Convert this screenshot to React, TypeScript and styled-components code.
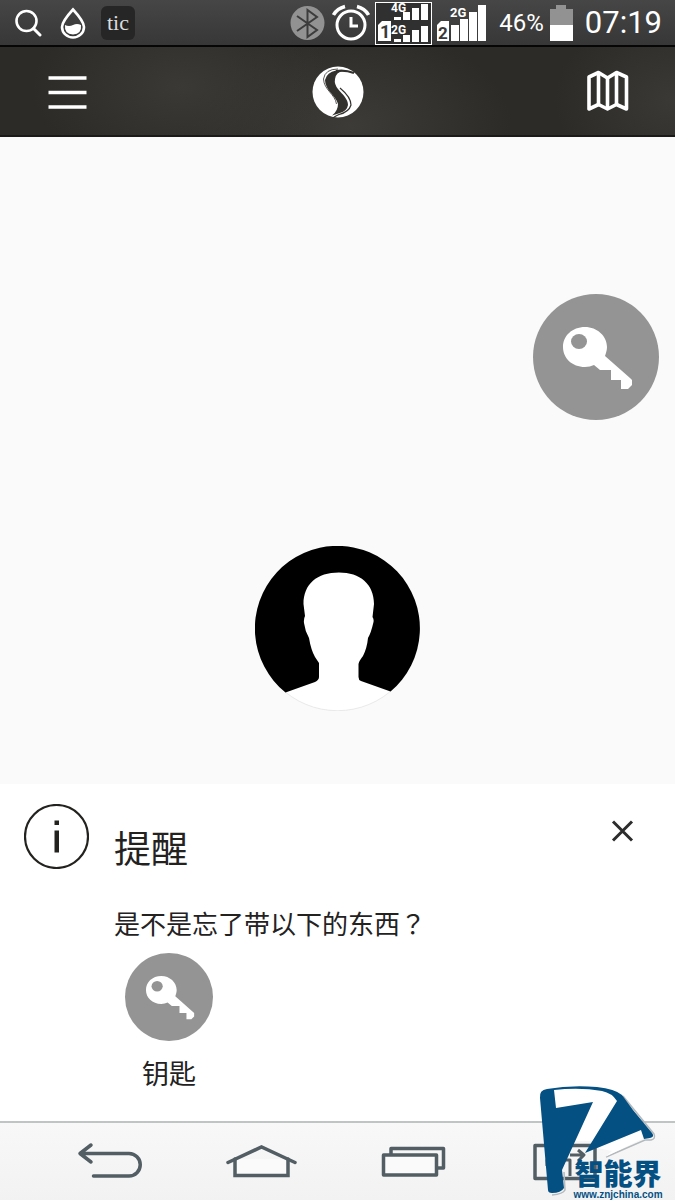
import React from 'react';
import styled, { createGlobalStyle } from 'styled-components';

const GlobalStyle = createGlobalStyle`
  *, *::before, *::after { box-sizing: border-box; }
  body {
    margin: 0;
    background: #fafafa;
    color: #23221f;
    font-family: Roboto, "Noto Sans CJK SC", sans-serif;
  }
  h1, p, ul { margin: 0; padding: 0; }
  svg { display: block; flex: none; }
`;

const Screen = styled.div`
  position: relative;
  display: flex;
  flex-direction: column;
  min-height: 100vh;
`;

const StatusBar = styled.div`
  display: flex;
  align-items: center;
  justify-content: space-between;
  height: 47px;
  padding: 0 13px 0 14px;
  border-bottom: 2px solid #060606;
  background: linear-gradient(#464646, #373737);
  color: #fff;
`;

const StatusGroup = styled.div<{ $gap: number }>`
  display: flex;
  align-items: center;
  gap: ${(p) => p.$gap}px;
`;

const AppBadge = styled.span`
  display: flex;
  align-items: center;
  justify-content: center;
  width: 34px;
  height: 34px;
  border-radius: 6px;
  background: #262626;
  color: #dcdcdc;
  font: 22px/32px "Liberation Serif", serif;
`;

const StatusText = styled.span<{ $size: number }>`
  font-size: ${(p) => p.$size}px;
  line-height: 40px;
`;

const Header = styled.header`
  display: grid;
  grid-template-columns: 1fr auto 1fr;
  align-items: center;
  height: 90px;
  padding: 2px 46px 0;
  border-bottom: 2px solid #1b1a18;
  background:
    radial-gradient(ellipse 150px 90px at 27% 45%, #3a3935, transparent),
    radial-gradient(ellipse 160px 100px at 52% 90%, #3c3b37, transparent),
    radial-gradient(ellipse 120px 90px at 100% 60%, #3a3935, transparent),
    #2c2b28;
`;

const IconButton = styled.button<{ $end?: boolean }>`
  display: flex;
  justify-self: ${(p) => (p.$end ? 'end' : 'start')};
  padding: 0;
  border: 0;
  background: none;
  color: inherit;
  cursor: pointer;
`;

const Stage = styled.main`
  display: flex;
  flex: 1;
  flex-direction: column;
  align-items: center;
  gap: 126px;
  padding: 157px 16px 72px;
  background: #fafafa;
`;

const NearbyItem = styled.button`
  align-self: flex-end;
  padding: 0;
  border: 0;
  background: none;
  cursor: pointer;
`;

const Reminder = styled.section`
  display: grid;
  grid-template-columns: 65px 1fr auto;
  column-gap: 25px;
  align-items: start;
  padding: 20px 38px 26px 24px;
  background: #fff;
`;

const ReminderBody = styled.div`
  display: flex;
  flex-direction: column;
  align-items: flex-start;
  padding-top: 23px;
`;

const Title = styled.h1`
  font-size: 37px;
  font-weight: 400;
  line-height: 48px;
`;

const Message = styled.p`
  padding-top: 30px;
  font-size: 26px;
  line-height: 40px;
`;

/* The Traditional Chinese face centres full-width punctuation in its cell. */
const CentredMark = styled.span`
  font-family: "Noto Sans CJK TC", sans-serif;
  line-height: 20px;
`;

const ItemList = styled.ul`
  display: flex;
  gap: 24px;
  padding: 8px 0 0 11px;
  list-style: none;
`;

const Item = styled.li`
  display: flex;
  flex-direction: column;
  align-items: center;
  gap: 14px;
  font-size: 27px;
  line-height: 40px;
`;

const CloseButton = styled(IconButton)`
  padding: 14px 0;
`;

const NavBar = styled.nav`
  display: grid;
  grid-template-columns: repeat(4, 1fr);
  height: 79px;
  padding: 0 34px;
  border-top: 2px solid #bfc4c4;
  background: linear-gradient(#f8f8f8, #f2f2f2);
`;

const NavButton = styled.button`
  display: flex;
  align-items: center;
  justify-content: center;
  padding: 0;
  border: 0;
  background: none;
  color: #525e64;
  cursor: pointer;
`;

const Watermark = styled.div`
  position: absolute;
  right: 12px;
  bottom: 0;
  width: 124px;
  height: 118px;
  color: #045083;
  pointer-events: none;
`;

const WatermarkText = styled.div`
  position: absolute;
  right: 0;
  bottom: 0;
  display: flex;
  flex-direction: column;
  align-items: center;
  gap: 3px;
  width: 90px;
  white-space: nowrap;
`;

const BrandName = styled.span`
  font: 900 29px/30px "Noto Sans CJK SC", sans-serif;
`;

const BrandUrl = styled.span`
  font: 700 10px/10px "Liberation Sans", sans-serif;
`;

const KeyBadge = ({ size }: { size: number }) => (
  <svg width={size} height={size} viewBox="0 0 126 126" aria-hidden="true">
    <circle cx="63" cy="63" r="63" fill="#949494" />
    <path
      fill="#fff"
      d="M52 33C64 33 74 42 74 53C74 56 73 59 72 62L97 84L99 86V91L95 95H88V86H78V76H67L61 71Q57 73 52 73C39 73 30 64 30 53C30 42 39 33 52 33Z"
    />
    <ellipse cx="46" cy="47.500" rx="8" ry="7.500" fill="#949494" />
  </svg>
);

const bars = (x: number, base: number, w: number, step: number, heights: number[]) =>
  heights.map((h, i) => <rect key={i} x={x + i * step} y={base - h} width={w} height={h} />);

export default function App() {
  return (
    <>
      <GlobalStyle />
      <Screen>
        <StatusBar>
          <StatusGroup $gap={16}>
            <svg width="28" height="30" viewBox="0 0 28 30" fill="none" stroke="#fff" strokeLinecap="round">
              <circle cx="12.500" cy="13" r="10" strokeWidth="2.600" />
              <path d="M19.500 20.500L26 27" strokeWidth="3" />
            </svg>
            <StatusGroup $gap={15}>
              <svg width="28" height="32" viewBox="0 0 28 32">
                <path
                  d="M15 2.500Q26 14.500 26 20A11 10.500 0 0 1 4 20Q4 14.500 15 2.500Z"
                  fill="none"
                  stroke="#fff"
                  strokeWidth="2.600"
                />
                <path d="M7 18Q11 20 15 18T23 18Q24 27 15 27.500Q6 27 7 18Z" fill="#fff" />
              </svg>
              <AppBadge>tic</AppBadge>
            </StatusGroup>
          </StatusGroup>
          <StatusGroup $gap={12}>
            <StatusGroup $gap={5}>
              <svg width="37" height="45" viewBox="290 0 37 45">
                <circle cx="307.500" cy="23" r="17" fill="#929292" />
                <path d="M297 16L317 30L307.500 37V10L317 17L297 31" fill="none" stroke="#3c3c3c" strokeWidth="2" />
              </svg>
              <svg width="38" height="45" viewBox="333 0 38 45" fill="none" stroke="#fff" strokeWidth="3">
                <circle cx="352" cy="25" r="14" />
                <path d="M352 17V26H359" />
                <path d="M334.500 15Q338 8.500 346 6.500M369.500 15Q366 8.500 358 6.500" strokeWidth="3.500" />
              </svg>
              <svg width="57" height="45" viewBox="375 0 57 45" fill="#fff" fontFamily="Roboto" fontWeight="700">
                <rect x="375.500" y="2.500" width="56" height="42" fill="#303030" stroke="#fff" />
                {bars(394, 20, 7, 9, [3, 8, 12, 16])}
                {bars(394, 42, 7, 9, [3, 7, 12, 16])}
                <text x="391" y="12" fontSize="12">4G</text>
                <text x="391" y="34" fontSize="12">2G</text>
                <path d="M378 25L382 21H391V41H378Z" />
                <text x="380" y="38" fontSize="18" fill="#3a3a3a">1</text>
              </svg>
              <svg width="50" height="45" viewBox="437 0 50 45" fill="#fff" fontFamily="Roboto" fontWeight="700">
                <text x="450" y="17" fontSize="13">2G</text>
                {bars(451, 41, 8, 9, [16, 22, 29, 36])}
                <path d="M437 25L441 21H449V41H437Z" />
                <text x="438" y="39" fontSize="17" fill="#3a3a3a">2</text>
              </svg>
            </StatusGroup>
            <StatusGroup $gap={6}>
              <StatusText $size={24}>46%</StatusText>
              <svg width="23" height="36" viewBox="0 0 23 36">
                <path d="M0 4H6V0H16V4H23V20H0Z" fill="#929292" />
                <path d="M0 20H23V36H0Z" fill="#fff" />
              </svg>
            </StatusGroup>
            <StatusText $size={31}>07:19</StatusText>
          </StatusGroup>
        </StatusBar>

        <Header>
          <IconButton aria-label="菜单">
            <svg width="42" height="36" viewBox="46 74 42 36">
              <path d="M48.500 78H86.500M48.500 92.500H86.500M48.500 107H86.500" stroke="#fff" strokeWidth="3.500" />
            </svg>
          </IconButton>
          <svg width="52" height="52" viewBox="312 66 52 52">
            <circle cx="338" cy="92" r="25.500" fill="#fff" />
            <path
              d="M343 71Q336 72 335 79Q334 84 338 89C343 95 348 99 348 105Q347 111 340 113L332 115.500Q338 111 338 104C336 96 325 90 325 80Q327 72 336 70.500Z"
              fill="#32312e"
            />
            <g fill="none" stroke="#32312e">
              <path d="M336 71Q345 69.500 354 73" strokeWidth="2.200" />
              <path d="M338 69Q325 69 323.500 79C324 90 335 94 336.500 104" strokeWidth="0.800" />
              <path d="M340 88C346 93 351 98 351 105Q349 112 339 114.500Q335 116 333 118" strokeWidth="1.200" />
            </g>
          </svg>
          <IconButton $end aria-label="地图">
            <svg width="42" height="44" viewBox="587 71 42 44" fill="none" stroke="#fff" strokeWidth="3.600" strokeLinejoin="round">
              <path d="M589 78L598.500 73.500L607.500 79L616.500 73.500L626.500 78V110L616.500 105.500L607.500 110L598.500 105.500L589 110Z" />
              <path d="M598.500 74V105M607.500 79V110M616.500 74V105" />
            </svg>
          </IconButton>
        </Header>

        <Stage>
          <NearbyItem aria-label="钥匙">
            <KeyBadge size={126} />
          </NearbyItem>
          <svg width="165" height="165" viewBox="0 0 165 165" role="img" aria-label="头像">
            <circle cx="82.500" cy="82.500" r="82.200" fill="#fff" stroke="#dcdcdc" strokeWidth="0.600" />
            <path
              d="M30.500 146.500A82.500 82.500 0 1 1 135.500 145.500L106 135Q103.500 134 103.500 131V118Q104 115 108 110Q112 102 113 92Q116 87 118.500 76Q119 73 117.500 71L119 58C119 38 105 26.500 84 26.500C62 26.500 48.500 38 48.500 58L50 70Q48.500 73 49 77Q50 85 54 92Q56 104 60 111L64 117V131Q64 134 60 136Z"
              fill="#000"
            />
          </svg>
        </Stage>

        <Reminder>
          <svg width="65" height="65" viewBox="0 0 65 65" aria-hidden="true">
            <circle cx="32.500" cy="32.500" r="31.500" fill="none" stroke="#23221f" strokeWidth="2.200" />
            <path d="M30.500 16.500H35V21H30.500ZM30.500 26.500H35V48.500H30.500Z" fill="#23221f" />
          </svg>
          <ReminderBody>
            <Title>提醒</Title>
            <Message>
              是不是忘了带以下的东西<CentredMark>？</CentredMark>
            </Message>
            <ItemList>
              <Item>
                <KeyBadge size={88} />
                钥匙
              </Item>
            </ItemList>
          </ReminderBody>
          <CloseButton aria-label="关闭">
            <svg width="28" height="28" viewBox="0 0 28 28">
              <path d="M4 3.500L23 22.500M23 3.500L4 22.500" stroke="#2c2c2c" strokeWidth="3" />
            </svg>
          </CloseButton>
        </Reminder>

        <NavBar>
          <NavButton aria-label="返回">
            <svg width="66" height="40" viewBox="77 1141 66 40" fill="none" stroke="currentColor" strokeWidth="3.500" strokeLinecap="round" strokeLinejoin="round">
              <path d="M91 1144L80 1152.500L91 1161M80 1152.500H129A11 11 0 0 1 129 1175H93.500" />
            </svg>
          </NavButton>
          <NavButton aria-label="主页">
            <svg width="72" height="40" viewBox="226 1141 72 40" fill="none" stroke="currentColor" strokeWidth="3.500" strokeLinecap="round">
              <path d="M235 1158V1174.500H288V1158" fill="#fafafa" />
              <path d="M228 1161.500L261.500 1146L295 1161.500" />
            </svg>
          </NavButton>
          <NavButton aria-label="最近任务">
            <svg width="66" height="40" viewBox="380 1141 66 40" fill="none" stroke="currentColor" strokeWidth="3.500" strokeLinejoin="round">
              <path d="M391 1153V1147.500H443.500V1167H437" />
              <rect x="383.500" y="1154" width="53" height="20" fill="#fafafa" />
            </svg>
          </NavButton>
          <NavButton aria-label="切换">
            <svg width="66" height="40" viewBox="532 1141 66 40" fill="none" stroke="currentColor" strokeWidth="3.500" strokeLinejoin="round">
              <rect x="535" y="1144.500" width="60" height="33" />
              <path d="M547 1165V1159H570V1175M570 1154H584M578 1149L584 1154L578 1160" strokeWidth="3" />
            </svg>
          </NavButton>
        </NavBar>

        <Watermark>
          <svg width="124" height="118" viewBox="539 1082 124 118" aria-hidden="true">
            <path
              d="M623 1096L654 1134Q656 1139 651 1140L645 1140L606 1157M564 1172L565 1190Q563 1194 552 1195"
              fill="none"
              stroke="#b4b9bc"
              strokeWidth="1.500"
            />
            <path d="M554 1090Q590 1085 602 1090Q613 1093 618 1101L594 1141H574L592 1103L556 1109Z" fill="#fff" />
            <path d="M597 1148L641 1130L644 1138L605 1157L612 1151Z" fill="#fff" />
            <path
              d="M540 1098Q539 1090 547 1089Q570 1085 597 1087Q615 1089 622 1095L633 1110L652 1133Q655 1137 650 1138L644 1139L641 1130L585 1153L617 1101Q612 1093 602 1091Q580 1087 554 1090L556 1108L593 1102L562 1170L564 1188Q561 1193 552 1193Q548 1193 548 1190Z"
              fill="#045083"
            />
          </svg>
          <WatermarkText>
            <BrandName>智能界</BrandName>
            <BrandUrl>www.znjchina.com</BrandUrl>
          </WatermarkText>
        </Watermark>
      </Screen>
    </>
  );
}
